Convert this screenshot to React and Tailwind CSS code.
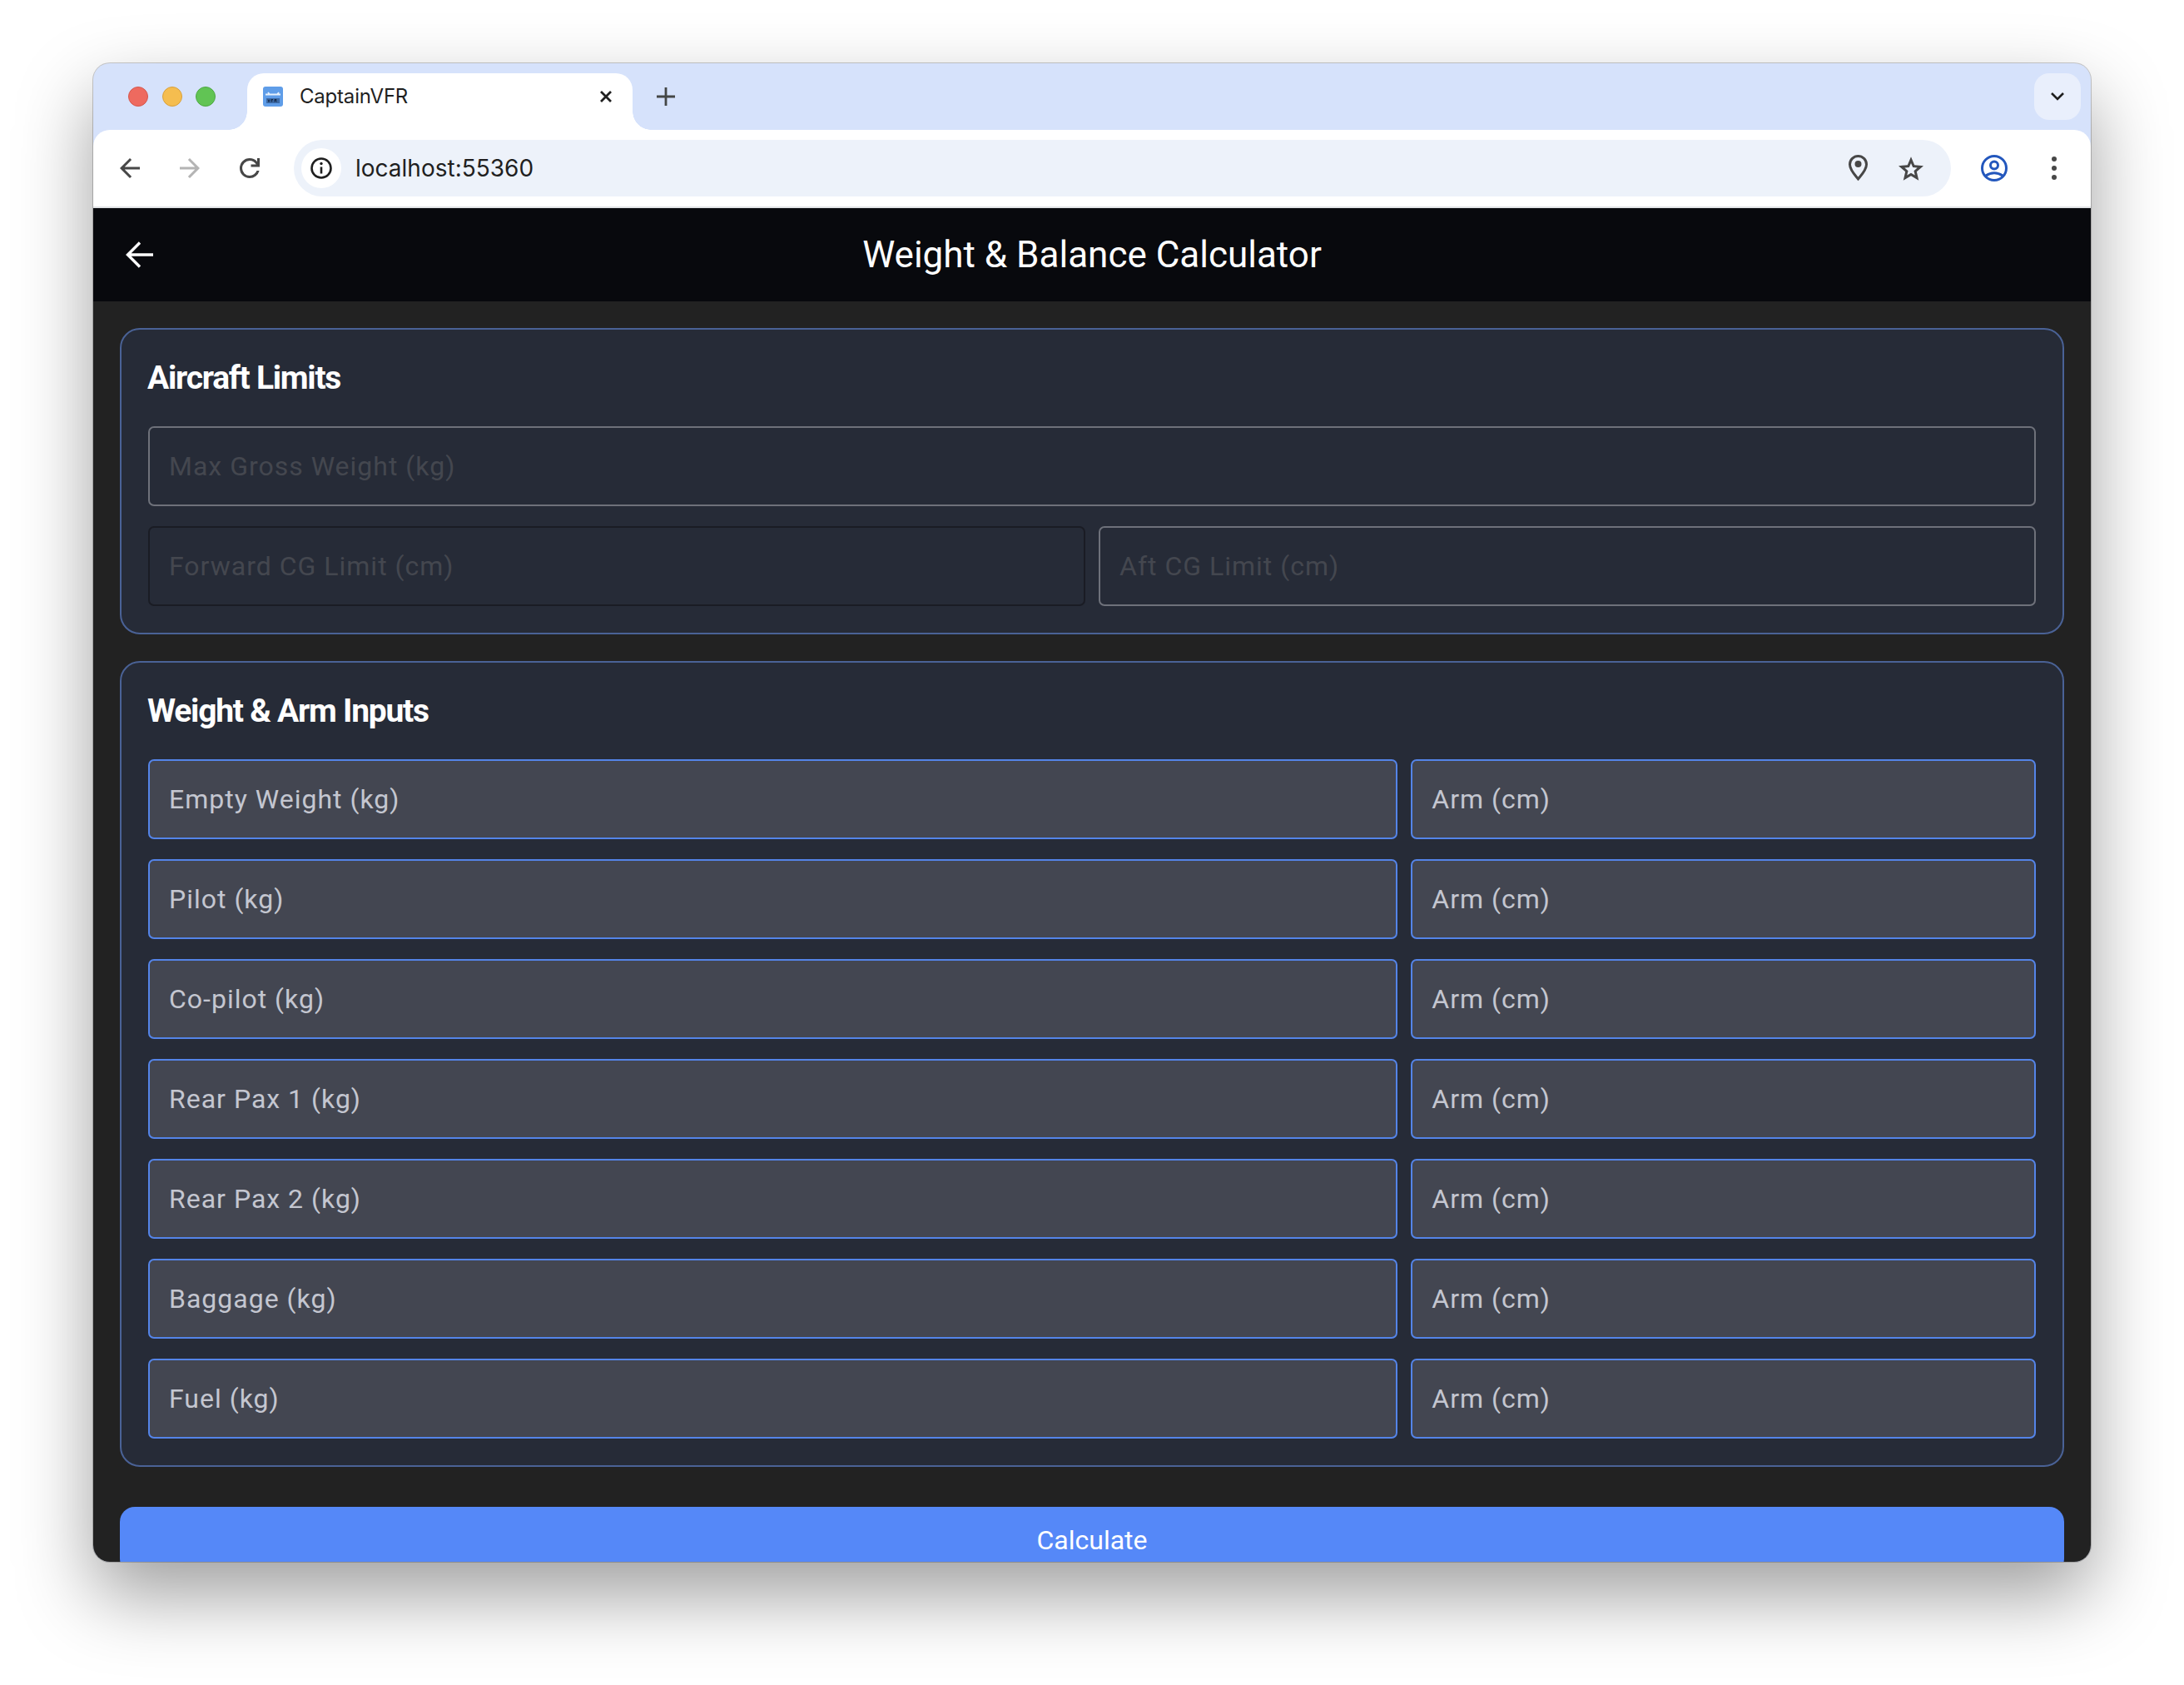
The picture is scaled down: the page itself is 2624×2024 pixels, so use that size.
import React from 'react';

const ROW_LABELS = ['Empty Weight (kg)', 'Pilot (kg)', 'Co-pilot (kg)', 'Rear Pax 1 (kg)', 'Rear Pax 2 (kg)', 'Baggage (kg)', 'Fuel (kg)'];

const Favicon = () => (
  <svg viewBox="0 0 24 24" className="w-[24px] h-[24px] shrink-0">
    <rect x="0" y="0" width="24" height="24" rx="3" fill="#5f9de8" />
    <path d="M3 9.5h18M6 7l2 2.5M17 9.5l2-2.5" stroke="#e8f1fc" strokeWidth="1.8" fill="none" />
    <path d="M4 14h16v6H4z" fill="#3c6aa6" />
    <path d="M6 15.5l1 3 1-3M10 15.5v3M10 15.5h2M10 17h1.6M14 18.5v-3h2l-.4 1.5H14M15.6 17l.8 1.5" stroke="#10233f" strokeWidth="0.9" fill="none" />
  </svg>
);

const NavArrow = ({ flip, color }) => (
  <svg viewBox="4 4 16 16" className={flip ? 'w-[24px] h-[24px] rotate-180' : 'w-[24px] h-[24px]'} fill={color}>
    <path d="M7.825 13l5.6 5.6L12 20l-8-8 8-8 1.425 1.4-5.6 5.6H20v2H7.825Z" />
  </svg>
);

const Field = ({ label, border, bg, text }) => (
  <div className={`h-[96px] rounded-[7px] border-2 flex items-center pl-[23px] pb-[1px] font-['Roboto',sans-serif] text-[32px] tracking-[1px] ${border} ${bg} ${text}`}>
    {label}
  </div>
);

const Card = ({ title, children }) => (
  <section className="rounded-[24px] border-2 border-[#4a6296] bg-[#262b37] px-[32px] pb-[32px]">
    <h2 className="h-[116px] pt-[35px] -ml-[1px] font-['Roboto',sans-serif] font-bold text-[39px] leading-[46px] text-white tracking-[-1.25px]">{title}</h2>
    {children}
  </section>
);

export default function App() {
  return (
    <div className="w-[2624px] h-[2024px] bg-white pt-[76px] pl-[112px] font-['Inter',sans-serif]">
      <div className="w-[2400px] h-[1800px] rounded-[20px] overflow-hidden flex flex-col bg-[#d6e2fb] shadow-[0_0_0_1px_rgba(0,0,0,0.2),0_40px_90px_rgba(0,0,0,0.38)]">
        {/* Tab strip */}
        <div className="h-[80px] shrink-0 flex items-center pl-[42px] pr-[12px]">
          <div className="flex gap-[16.5px]">
            <span className="w-[24px] h-[24px] rounded-full bg-[#ee6a5f] border border-[#d5574c]" />
            <span className="w-[24px] h-[24px] rounded-full bg-[#f5bd4f] border border-[#d8a03c]" />
            <span className="w-[24px] h-[24px] rounded-full bg-[#61c454] border border-[#4ea843]" />
          </div>
          <div className="relative self-end ml-[38px] w-[463px] h-[68px] bg-white rounded-t-[20px] flex items-center pl-[19px] pb-[12px]">
            <span className="absolute bottom-0 -left-[22px] w-[22px] h-[22px] bg-[radial-gradient(circle_at_0_0,transparent_21.5px,white_22px)]" />
            <span className="absolute bottom-0 -right-[22px] w-[22px] h-[22px] bg-[radial-gradient(circle_at_100%_0,transparent_21.5px,white_22px)]" />
            <Favicon />
            <span className="ml-[20px] text-[24px] text-[#1f1f1f] font-['Inter',sans-serif] tracking-[-0.2px]">CaptainVFR</span>
            <svg viewBox="0 0 16 16" className="absolute left-[423px] top-[20px] w-[16px] h-[16px]" fill="none" stroke="#1f1f1f" strokeWidth="2.8">
              <path d="M2 2l12 12M14 2L2 14" />
            </svg>
          </div>
          <svg viewBox="0 0 22 22" className="ml-[29px] w-[22px] h-[22px]" fill="none" stroke="#444746" strokeWidth="2.8">
            <path d="M11 0v22M0 11h22" />
          </svg>
          <div className="ml-auto w-[56px] h-[56px] rounded-[18px] bg-[#e9effc] flex items-center justify-center">
            <svg viewBox="0 0 16 10" className="w-[16px] h-[10px]" fill="none" stroke="#1f1f1f" strokeWidth="2.6">
              <path d="M1 1l7 7 7-7" />
            </svg>
          </div>
        </div>

        {/* Toolbar */}
        <div className="h-[94px] shrink-0 bg-white rounded-t-[20px] border-b-2 border-[#e1e3e6] flex items-center pl-[32px]">
          <NavArrow color="#474747" />
          <div className="ml-[48px]"><NavArrow flip color="#b4b4b4" /></div>
          <svg viewBox="4 4 16 16" className="ml-[48px] w-[24px] h-[24px]" fill="#474747">
            <path d="M12 20q-3.35 0-5.675-2.325T4 12q0-3.35 2.325-5.675T12 4q1.725 0 3.3.713T18 6.75V4h2v7h-7V9h4.2q-.8-1.4-2.188-2.2T12 6Q9.5 6 7.750 7.750T6 12q0 2.500 1.750 4.250T12 18q1.925 0 3.475-1.100T17.650 14h2.100q-.700 2.650-2.850 4.325T12 20Z" />
          </svg>
          <div className="ml-[41px] w-[1991px] h-[68px] rounded-full bg-[#edf2fa] flex items-center pl-[9px] pr-[33px]">
            <div className="w-[48px] h-[48px] rounded-full bg-white flex items-center justify-center">
              <svg viewBox="0 0 26 26" className="w-[26px] h-[26px]" fill="none" stroke="#1f1f1f" strokeWidth="2.6">
                <circle cx="13" cy="13" r="11.5" />
                <path d="M13 11.500v8" />
                <circle cx="13" cy="7.500" r="1.700" fill="#1f1f1f" stroke="none" />
              </svg>
            </div>
            <span className="ml-[17px] text-[28px] text-[#1f1f1f] font-['Inter',sans-serif]">localhost:55360</span>
            <svg viewBox="0 0 23 32" className="ml-auto w-[23px] h-[32px]" fill="none" stroke="#474747" strokeWidth="3">
              <path d="M11.500 29C7 23.500 1.500 18 1.500 11.500a10 10 0 0 1 20 0C21.500 18 16 23.500 11.500 29z" />
              <circle cx="11.500" cy="11" r="4" fill="#474747" stroke="none" />
            </svg>
            <svg viewBox="2 2 20 19" className="ml-[37px] w-[30px] h-[29px]" fill="#474747">
              <path d="m8.850 16.825 3.150-1.900 3.150 1.925-.825-3.600 2.775-2.400-3.650-.325-1.450-3.400-1.450 3.375-3.650.325 2.775 2.425-.825 3.575ZM5.825 21l1.625-7.025L2 9.250l7.200-.625L12 2l2.800 6.625 7.200.625-5.450 4.725L18.175 21 12 17.275 5.825 21Z" />
            </svg>
          </div>
          <svg viewBox="0 0 32 32" className="ml-[36px] w-[32px] h-[32px]" fill="none" stroke="#2357bd" strokeWidth="3">
            <circle cx="16" cy="16" r="14.500" />
            <circle cx="16" cy="12.500" r="4.500" />
            <path d="M6 25c6-4.500 14-4.500 20 0" />
          </svg>
          <div className="ml-[53px] flex flex-col gap-[5px]">
            <span className="w-[6px] h-[6px] rounded-full bg-[#474747]" />
            <span className="w-[6px] h-[6px] rounded-full bg-[#474747]" />
            <span className="w-[6px] h-[6px] rounded-full bg-[#474747]" />
          </div>
        </div>

        {/* App bar */}
        <header className="h-[112px] shrink-0 bg-[#08090d] grid grid-cols-[1fr_auto_1fr] items-center">
          <svg viewBox="0 0 33 32" className="ml-[39px] w-[33px] h-[32px]" fill="none" stroke="#ffffff" strokeWidth="3.400">
            <path d="M33 16H3M17 1.500L2.500 16 17 30.500" />
          </svg>
          <h1 className="font-['Roboto',sans-serif] text-[44px] text-white">Weight &amp; Balance Calculator</h1>
        </header>

        {/* Page body */}
        <main className="flex-1 min-h-0 bg-[#222222] px-[32px] pt-[32px] flex flex-col overflow-hidden">
          <Card title="Aircraft Limits">
            <div className="grid grid-cols-2 gap-x-[16px] gap-y-[24px]">
              <div className="col-span-2">
                <Field label="Max Gross Weight (kg)" border="border-[#6e717a]" bg="bg-[#262b37]" text="text-[#44474f]" />
              </div>
              <Field label="Forward CG Limit (cm)" border="border-[#1a1c24]" bg="bg-[#262b37]" text="text-[#44474f]" />
              <Field label="Aft CG Limit (cm)" border="border-[#6e717a]" bg="bg-[#262b37]" text="text-[#44474f]" />
            </div>
          </Card>
          <div className="mt-[32px]">
            <Card title="Weight & Arm Inputs">
              <div className="grid grid-cols-[2fr_1fr] gap-x-[16px] gap-y-[24px]">
                {ROW_LABELS.map((label) => (
                  <React.Fragment key={label}>
                    <Field label={label} border="border-[#5484e8]" bg="bg-[#434651]" text="text-[#c4c6d0]" />
                    <Field label="Arm (cm)" border="border-[#5484e8]" bg="bg-[#434651]" text="text-[#c4c6d0]" />
                  </React.Fragment>
                ))}
              </div>
            </Card>
          </div>
          <button className="mt-[48px] h-[80px] shrink-0 rounded-[18px] bg-[#5588f8] text-white font-['Roboto',sans-serif] text-[32px]">
            Calculate
          </button>
        </main>
      </div>
    </div>
  );
}
